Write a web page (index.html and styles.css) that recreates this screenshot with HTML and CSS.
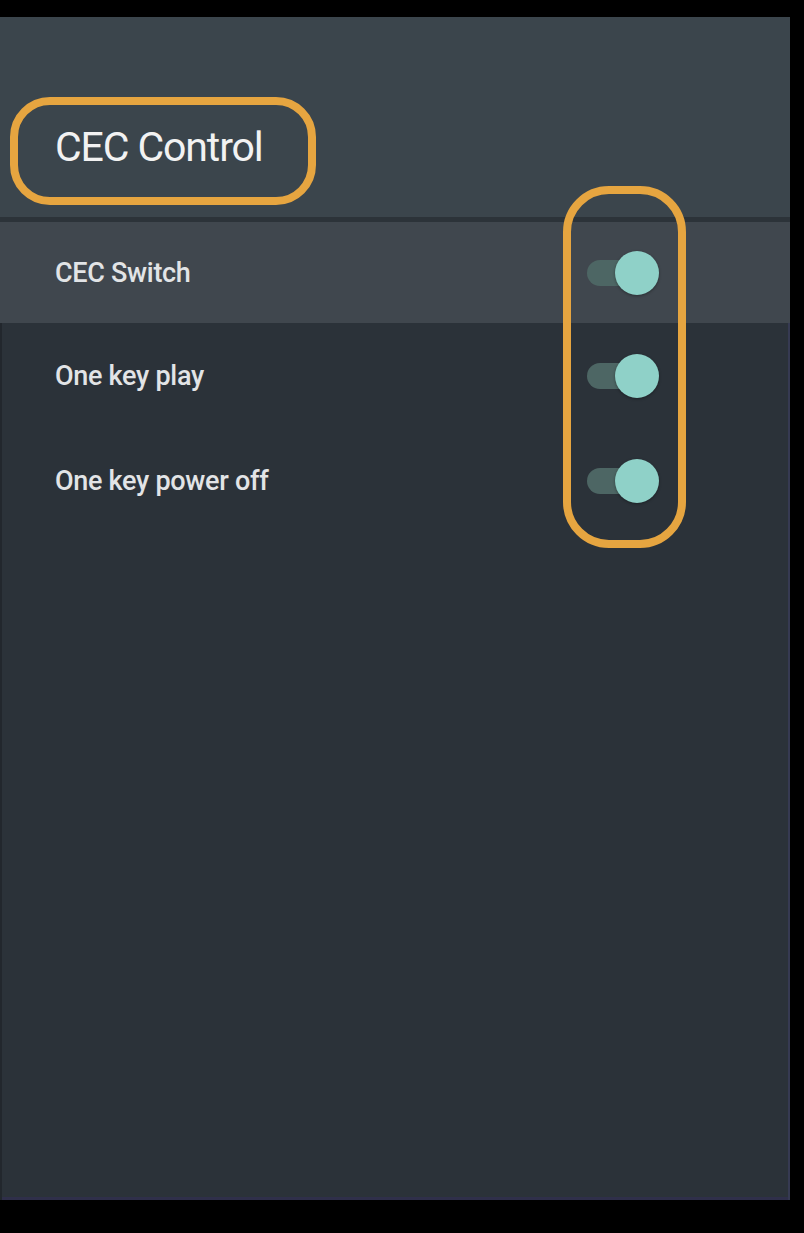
FILE: index.html
```html
<!DOCTYPE html>
<html>
<head>
<meta charset="utf-8">
<link rel="stylesheet" href="styles.css">
</head>
<body>
<div class="panel">
  <header class="header">
    <h1 class="title">CEC Control</h1>
    <span class="mark mark-title"></span>
  </header>
  <div class="list">
    <div class="row selected">
      <span class="label">CEC Switch</span>
      <span class="switch"><span class="track"></span><span class="thumb"></span></span>
    </div>
    <div class="row">
      <span class="label">One key play</span>
      <span class="switch"><span class="track"></span><span class="thumb"></span></span>
    </div>
    <div class="row">
      <span class="label">One key power off</span>
      <span class="switch"><span class="track"></span><span class="thumb"></span></span>
    </div>
  </div>
  <span class="mark mark-toggles"></span>
</div>
</body>
</html>
```
FILE: styles.css
```css
html, body {
  margin: 0;
  padding: 0;
  background: #000;
}
body {
  width: 804px;
  height: 1233px;
  font-family: Roboto, "Liberation Sans", sans-serif;
}
.panel {
  position: relative;
  margin-top: 17px;
  width: 790px;
  height: 1183px;
  background: #2b3239;
  box-shadow: inset 2px 0 0 #22272d, inset -2px 0 0 #363a52, inset 0 -3px 0 #2f2f4a;
  display: flex;
  flex-direction: column;
}
.header {
  position: relative;
  height: 205px;
  background: #3b454c;
  border-bottom: 5px solid #2c3339;
  display: flex;
  align-items: center;
  box-sizing: border-box;
  padding-left: 55px;
  padding-top: 60px;
}
.title {
  margin: 0;
  font-size: 41px;
  font-weight: 400;
  letter-spacing: -1.1px;
  color: #f2f2f2;
}
.list {
  display: flex;
  flex-direction: column;
}
.row {
  height: 105px;
  display: flex;
  align-items: center;
  justify-content: space-between;
  padding-left: 55px;
  padding-right: 131px;
}
.row.selected {
  height: 101px;
  background: #40474e;
}
.label {
  font-size: 27px;
  font-weight: 500;
  letter-spacing: -0.3px;
  color: #e2e4e6;
}
.switch {
  position: relative;
  width: 72px;
  height: 44px;
  display: flex;
  align-items: center;
}
.track {
  width: 56px;
  height: 26px;
  border-radius: 13px;
  background: #4d6664;
}
.thumb {
  position: absolute;
  right: 0;
  top: 0;
  width: 44px;
  height: 44px;
  border-radius: 50%;
  background: #8fd1c8;
  box-shadow: 0 1px 3px rgba(0,0,0,0.35);
}
.mark {
  position: absolute;
  border: 8px solid #e6a540;
  box-sizing: border-box;
}
.mark-title {
  left: 10px;
  top: 80px;
  width: 306px;
  height: 108px;
  border-radius: 40px;
}
.mark-toggles {
  left: 563px;
  top: 169px;
  width: 123px;
  height: 362px;
  border-radius: 46px;
}
```
